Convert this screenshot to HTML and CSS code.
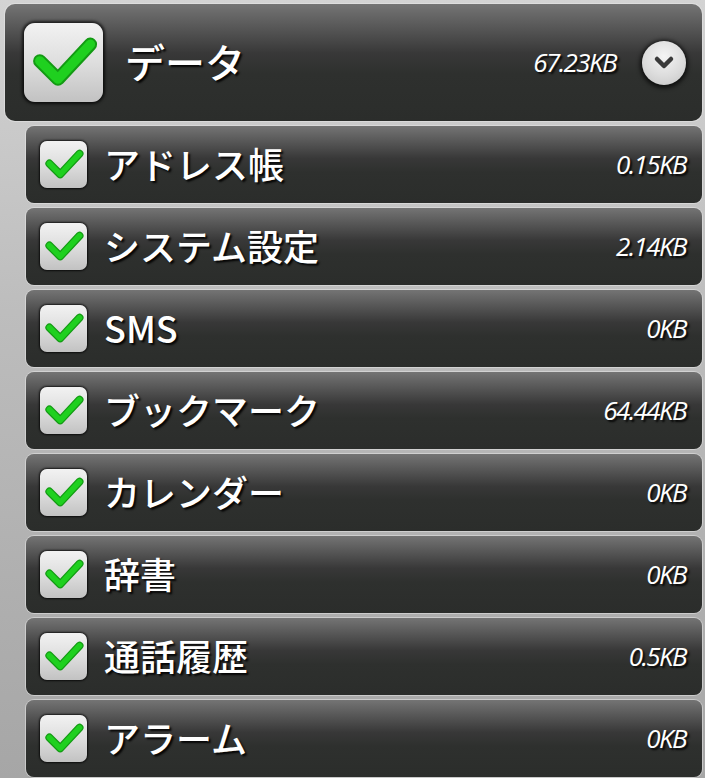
FILE: index.html
```html
<!DOCTYPE html>
<html lang="ja">
<head>
<meta charset="utf-8">
<title>データ</title>
<link rel="stylesheet" href="styles.css">
</head>
<body>
<div class="list">
  <div class="header">
    <div class="cb cb-big">
      <svg viewBox="0 0 100 100"><polyline class="ck-o" points="20,48 43,71 84,27"/><polyline class="ck" points="20,48 43,71 84,27"/></svg>
    </div>
    <div class="title">データ</div>
    <div class="size">67.23KB</div>
    <div class="expand">
      <svg viewBox="0 0 44 44"><polyline points="15,18 22,25 29,18"/></svg>
    </div>
  </div>
  <div class="children">
    <div class="row"><div class="cb"><svg viewBox="0 0 100 100"><polyline class="ck-o" points="20,48 43,71 84,27"/><polyline class="ck" points="20,48 43,71 84,27"/></svg></div><div class="label">アドレス帳</div><div class="size">0.15KB</div></div>
    <div class="row"><div class="cb"><svg viewBox="0 0 100 100"><polyline class="ck-o" points="20,48 43,71 84,27"/><polyline class="ck" points="20,48 43,71 84,27"/></svg></div><div class="label">システム設定</div><div class="size">2.14KB</div></div>
    <div class="row"><div class="cb"><svg viewBox="0 0 100 100"><polyline class="ck-o" points="20,48 43,71 84,27"/><polyline class="ck" points="20,48 43,71 84,27"/></svg></div><div class="label">SMS</div><div class="size">0KB</div></div>
    <div class="row"><div class="cb"><svg viewBox="0 0 100 100"><polyline class="ck-o" points="20,48 43,71 84,27"/><polyline class="ck" points="20,48 43,71 84,27"/></svg></div><div class="label">ブックマーク</div><div class="size">64.44KB</div></div>
    <div class="row"><div class="cb"><svg viewBox="0 0 100 100"><polyline class="ck-o" points="20,48 43,71 84,27"/><polyline class="ck" points="20,48 43,71 84,27"/></svg></div><div class="label">カレンダー</div><div class="size">0KB</div></div>
    <div class="row"><div class="cb"><svg viewBox="0 0 100 100"><polyline class="ck-o" points="20,48 43,71 84,27"/><polyline class="ck" points="20,48 43,71 84,27"/></svg></div><div class="label">辞書</div><div class="size">0KB</div></div>
    <div class="row"><div class="cb"><svg viewBox="0 0 100 100"><polyline class="ck-o" points="20,48 43,71 84,27"/><polyline class="ck" points="20,48 43,71 84,27"/></svg></div><div class="label">通話履歴</div><div class="size">0.5KB</div></div>
    <div class="row"><div class="cb"><svg viewBox="0 0 100 100"><polyline class="ck-o" points="20,48 43,71 84,27"/><polyline class="ck" points="20,48 43,71 84,27"/></svg></div><div class="label">アラーム</div><div class="size">0KB</div></div>
  </div>
</div>
</body>
</html>
```

FILE: styles.css
```css
html, body {
  margin: 0;
  padding: 0;
}
body {
  width: 705px;
  height: 778px;
  overflow: hidden;
  background: linear-gradient(to bottom, #d3d3d3 0%, #bdbdbd 40%, #a6a6a6 100%);
  font-family: "Noto Sans CJK JP", "Noto Sans", sans-serif;
  color: #fff;
}
.list {
  padding: 4px 3px 0 5px;
  display: flex;
  flex-direction: column;
}
.header, .row {
  display: flex;
  align-items: center;
  box-sizing: border-box;
  background: linear-gradient(to bottom, #747474 0%, #5a5a5a 18%, #383838 42%, #2e302e 60%, #2b2d2b 100%);
  box-shadow: 0 0 0 1px rgba(230,230,230,0.55);
}
.header {
  height: 117px;
  border-radius: 10px;
  padding: 0 16px 0 19px;
}
.children {
  margin: 5px 0 0 21px;
  display: flex;
  flex-direction: column;
  gap: 5px;
}
.row {
  height: 77px;
  border-radius: 8px;
  padding: 0 16px 0 14px;
}
.cb {
  flex: none;
  width: 47px;
  height: 47px;
  box-sizing: border-box;
  border-radius: 7px;
  background: linear-gradient(to bottom, #f2f2f2 0%, #dedede 50%, #c2c2c2 100%);
  box-shadow: 0 0 2px 1px rgba(0,0,0,0.75);
  display: flex;
  align-items: center;
  justify-content: center;
}
.cb svg {
  width: 100%;
  height: 100%;
  display: block;
}
.cb-big {
  width: 79px;
  height: 79px;
  border-radius: 11px;
  box-shadow: 0 0 3px 2px rgba(0,0,0,0.7);
}
.ck-o {
  fill: none;
  stroke: #139a13;
  stroke-width: 17;
  stroke-linecap: round;
  stroke-linejoin: round;
}
.ck {
  fill: none;
  stroke: #1fd01f;
  stroke-width: 12;
  stroke-linecap: round;
  stroke-linejoin: round;
}
.title, .label {
  flex: 1;
  text-shadow: 2px 2px 2px rgba(0,0,0,0.9);
  white-space: nowrap;
  padding-bottom: 4px;
}
.title {
  margin-left: 22px;
  font-size: 40px;
  font-weight: 500;
  line-height: 1;
}
.label {
  margin-left: 17px;
  font-size: 36px;
  font-weight: 500;
  line-height: 1;
}
.size {
  font-family: "Open Sans", "DejaVu Sans", sans-serif;
  font-style: italic;
  font-weight: 500;
  font-size: 26px;
  letter-spacing: -1.6px;
  text-shadow: 2px 2px 2px rgba(0,0,0,0.9);
  white-space: nowrap;
  padding-bottom: 2px;
}
.expand {
  flex: none;
  width: 44px;
  height: 44px;
  margin-left: 26px;
  border-radius: 50%;
  background: radial-gradient(circle at 50% 35%, #f4f4f4 0%, #dcdcdc 55%, #c4c4c4 100%);
  box-shadow: 0 1px 4px 2px rgba(0,0,0,0.7);
}
.expand svg {
  display: block;
  width: 100%;
  height: 100%;
}
.expand polyline {
  fill: none;
  stroke: #3a3a3a;
  stroke-width: 4.5;
  stroke-linecap: round;
  stroke-linejoin: round;
}
```
